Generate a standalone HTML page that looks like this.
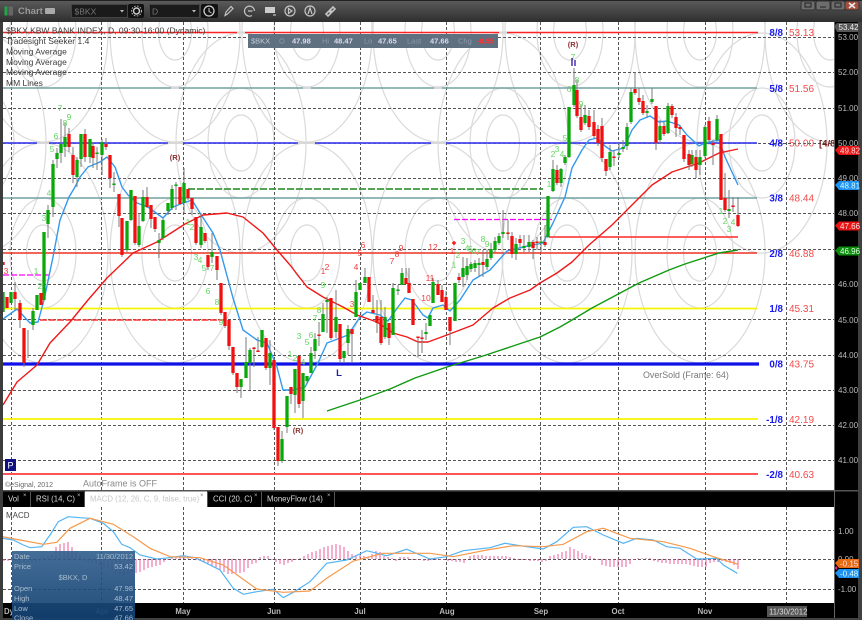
<!DOCTYPE html>
<html><head><meta charset="utf-8"><title>Chart</title>
<style>
html,body{margin:0;padding:0;background:#333;width:862px;height:620px;overflow:hidden}
svg{display:block;font-family:"Liberation Sans",sans-serif}
</style></head><body>
<svg width="862" height="620" viewBox="0 0 862 620" xmlns="http://www.w3.org/2000/svg">
<defs>
<linearGradient id="tb" x1="0" y1="0" x2="0" y2="1"><stop offset="0" stop-color="#5c5c5c"/><stop offset="1" stop-color="#2e2e2e"/></linearGradient>
<linearGradient id="tt" x1="0" y1="0" x2="0" y2="1"><stop offset="0" stop-color="#2f5e8c" stop-opacity=".9"/><stop offset="1" stop-color="#123f70" stop-opacity=".93"/></linearGradient>
<clipPath id="c1"><rect x="3" y="22" width="831" height="468"/></clipPath>
<clipPath id="c2"><rect x="3" y="507" width="831" height="96"/></clipPath>
<clipPath id="c3"><rect x="12" y="551" width="123" height="69"/></clipPath>
<g id="a" fill="none" stroke="#dadada" stroke-width="1.200"><ellipse rx="16.500" ry="28"/><ellipse rx="33" ry="55"/><ellipse rx="65" ry="110"/></g>
</defs>
<rect width="862" height="620" fill="#404040"/>
<rect x="0" y="0" width="862" height="22" fill="url(#tb)"/>
<rect x="0" y="0" width="862" height="1" fill="#222"/>
<!-- title -->
<rect x="4.500" y="6.500" width="3" height="9" fill="#1fa84a"/><rect x="8.500" y="6.500" width="4.500" height="9" fill="#666"/>
<text x="18" y="14" font-size="9.500" font-weight="bold" fill="#9a9a9a">Chart</text>
<rect x="45" y="8" width="10" height="6" rx="1" fill="#aaa"/>
<rect x="71.500" y="4.500" width="56" height="13" fill="#1a1a1a" stroke="#444"/>
<text x="74.500" y="14.500" font-size="8.500" fill="#777">$BKX</text><path d="M120 10h4l-2 2.500z" fill="#bbb"/>
<rect x="128" y="4" width="16" height="14" rx="2" fill="#111"/><circle cx="136.500" cy="11" r="3" fill="none" stroke="#ccc" stroke-width="1.500"/><circle cx="136.500" cy="11" r="5" fill="none" stroke="#bbb" stroke-dasharray="1.500 1.500"/>
<rect x="149.500" y="4.500" width="50" height="13" fill="#1a1a1a" stroke="#444"/>
<text x="152" y="14.500" font-size="8.500" fill="#777">D</text><path d="M192 10h4l-2 2.500z" fill="#bbb"/>
<rect x="201" y="4" width="17" height="14" rx="2" fill="#111"/><circle cx="209" cy="11" r="5" fill="none" stroke="#ccc" stroke-width="1.300"/><path d="M209 8v3.500l2.500 1.500" fill="none" stroke="#ccc"/>
<g fill="none" stroke="#c4c4c4" stroke-width="1.200">
<path d="M225 15.500l1-3.500 5-5.500 2 2-5.500 5.500z"/>
<path d="M254.500 11a5 5 0 1 0-2.500 4.500M248 11h4.500"/>
<rect x="265" y="7" width="10" height="6" fill="#ccc" stroke="none"/><path d="M273 15h3"/>
<circle cx="290" cy="11" r="5"/><path d="M288.500 8.500l3.500 2.500-3.500 2.500z"/>
<circle cx="310" cy="11" r="5"/><path d="M308 14l2-6 2 6"/>
<path d="M326 14l3-3 2 2-3 3zM330 10l3-3 2 2-3 3z" stroke-width="1.600"/>
</g>
<!-- window buttons -->
<g stroke="#333"><rect x="801" y="1" width="14" height="9" rx="2" fill="#6d6d6d"/><rect x="816" y="1" width="14" height="9" rx="2" fill="#6d6d6d"/><rect x="831" y="1" width="14" height="9" rx="2" fill="#6d6d6d"/><rect x="845" y="1" width="14" height="9" rx="2" fill="#a5503c"/></g>
<path d="M805 3h6v4h-6zM820 7h6M835 3h6v4h-6z" fill="none" stroke="#222"/><path d="M849 3l6 5M855 3l-6 5" stroke="#eee" stroke-width="1.500"/>
<!-- main chart -->
<rect x="3" y="22" width="831" height="468" fill="#fff"/>
<rect x="834" y="22" width="24" height="581" fill="#000"/>
<g clip-path="url(#c1)">
<use href="#a" x="43" y="32"/><use href="#a" x="175" y="32"/><use href="#a" x="307" y="32"/><use href="#a" x="438" y="32"/><use href="#a" x="570" y="32"/><use href="#a" x="700" y="32"/><use href="#a" x="830" y="32"/>
<use href="#a" x="-19" y="143"/><use href="#a" x="241" y="143"/><use href="#a" x="503" y="143"/><use href="#a" x="762" y="143"/>
<use href="#a" x="43" y="253"/><use href="#a" x="175" y="253"/><use href="#a" x="307" y="253"/><use href="#a" x="438" y="253"/><use href="#a" x="567" y="253"/><use href="#a" x="700" y="253"/>
<g stroke="#555" stroke-width="1" stroke-dasharray="3 2" fill="none">
<path d="M11.500 22V490M101.500 22V490M183.500 22V490M274.500 22V490M360.500 22V490M446.500 22V490M540.500 22V490M618.500 22V490M705.500 22V490M786.500 22V490"/>
<path d="M3 37.500H834M3 72.500H834M3 108.500H834M3 143.500H834M3 178.500H834M3 213.500H834M3 249.500H834M3 284.500H834M3 319.500H834M3 355.500H834M3 390.500H834M3 425.500H834M3 460.500H834"/>
</g>
<!-- MM lines -->
<g fill="none">
<path d="M3 32.500H758" stroke="#f22" stroke-width="1.600"/>
<path d="M3 88H757" stroke="#72a0a0" stroke-width="1.600"/>
<path d="M3 143H757" stroke="#4a4aee" stroke-width="1.800"/>
<path d="M3 198H757" stroke="#72a0a0" stroke-width="1.600"/>
<path d="M3 253H757" stroke="#e32" stroke-width="1.400"/>
<path d="M3 308.500H757" stroke="#f7f500" stroke-width="1.800"/>
<path d="M3 364H759" stroke="#1010e8" stroke-width="3.200"/>
<path d="M3 419H758" stroke="#f7f500" stroke-width="1.800"/>
<path d="M3 474H758" stroke="#f55" stroke-width="2"/>
<path d="M188 189H543" stroke="#3a9a3a" stroke-width="1.800" stroke-dasharray="7 2"/>
<path d="M454 219.500H552" stroke="#f0f" stroke-width="1.200" stroke-dasharray="6 2"/>
<path d="M3 275H50" stroke="#f0f" stroke-width="1.200" stroke-dasharray="6 2"/>
<path d="M40 320H225" stroke="#f33" stroke-width="1.500" stroke-dasharray="7 1.500"/>
<path d="M549 237H738" stroke="#f44" stroke-width="1.800"/>
</g>
<!-- pinch gaps -->
<path fill="none" stroke="#d8d8d8" stroke-width="2" d="M37 143h12M168 143h15M298 143h17M431 143h15M171 88h8M303 88h8M434 88h8M237 32.500h8M499 32.500h8"/>
<!-- moving averages -->
<g fill="none" stroke-linejoin="round">
<polyline stroke="#3399ee" stroke-width="1.400" points="3,319 17,309 30,323 38,322 44,300 53,257 60,220 69,197 75,187 80,177 88,167 100,162 107,157 115,167 122,187 128,195 137,203 148,207 163,218 173,207 183,203 192,200 200,213 213,233 220,250 233,298 243,330 257,340 267,343 277,367 283,390 293,390 305,387 318,363 327,343 335,340 348,335 360,317 367,312 380,315 388,321 398,307 405,298 412,300 423,315 428,318 433,308 443,305 450,311 460,300 473,280 490,270 507,251 523,247 543,243 553,223 565,197 572,168 582,150 589,140 597,138 605,146 612,151 624,148 632,130 640,120 650,116 659,122 667,121 679,125 687,135 699,146 705,143 719,140 725,157 738,185"/>
<polyline stroke="#f01818" stroke-width="1.400" points="3,405 17,382 37,365 50,343 70,322 88,300 107,278 133,253 157,242 185,224 203,215 227,213 243,217 263,233 277,250 290,265 307,287 323,297 343,307 357,315 377,322 393,333 407,337 418,342 428,342 447,335 473,325 493,308 510,298 530,290 540,283 557,273 572,262 589,245 612,225 630,207 652,185 672,172 699,163 719,153 738,149"/>
<polyline stroke="#119911" stroke-width="1.400" points="327,411 360,400 390,389 415,378 447,367 483,356 510,347 540,337 560,327 572,320 592,308 639,283 669,270 685,264 719,253 738,250"/>
</g>
<!-- wicks -->
<path fill="none" stroke="#7b7b7b" stroke-width="1" d="M15 282V310M20 300V328M24 328V367M28 330V358M33 308V330M44 232V300M48 205V238M53 160V217M57 148V168M61 119V163M65 123V157M69 128V152M73 147V183M77 157V187M81 134V167M85 129V162M90 139V163M93 142V168M97 147V170M102 139V175M106 138V150M110 155V188M114 172V192M119 194V227M122 218V257M127 221V252M131 190V221M135 196V245M139 213V247M143 190V222M147 187V208M151 205V228M155 217V232M159 233V258M163 218V240M168 203V215M172 185V210M176 182V210M180 187V205M184 168V213M188 189V200M192 198V215M196 217V245M201 213V248M205 233V243M208 255V270M212 233V263M217 256V280M221 283V315M225 312V328M229 320V350M233 347V375M237 373V393M241 379V398M246 337V378M250 348V390M254 347V367M258 337V352M262 330V348M266 338V370M270 340V385M274 360V430M278 427V466M282 431V463M287 396V433M291 387V404M295 369V413M299 356V408M303 373V418M307 376V384M311 347V373M315 333V359M319 322V346M323 303V332M327 297V333M331 298V340M336 290V338M340 324V363M344 351V363M348 325V355M352 329V363M356 280V317M360 283V290M365 268V283M369 277V302M373 295V313M377 300V333M381 300V345M385 307V339M389 323V345M393 283V335M398 285V295M402 268V285M406 268V284M409 268V293M413 299V325M418 337V357M422 330V353M426 323V340M430 315V326M433 278V303M438 280V295M442 285V302M446 291V310M450 317V345M455 283V321M459 273V283M463 257V287M467 258V280M471 262V272M475 260V272M479 258V276M483 250V277M487 250V270M491 243V260M495 237V252M499 233V245M503 210V238M508 220V240M512 232V258M516 238V260M520 235V247M524 235V252M529 235V252M533 240V259M537 237V250M541 236V252M545 225V247M548 196V238M553 160V192M557 165V185M561 168V187M565 155V165M569 107V158M574 68V107M577 80V118M581 105V132M585 105V125M589 110V130M594 110V138M598 125V146M602 118V162M606 159V176M610 145V170M614 150V166M619 143V158M623 140V152M627 123V150M631 88V124M635 72V95M639 88V105M643 95V115M647 105V118M652 88V104M656 106V150M660 120V144M664 122V136M668 103V134M672 104V118M676 113V137M680 125V135M684 135V162M689 150V170M692 150V167M696 150V178M700 150V175M705 125V158M709 117V142M713 140V165M717 115V142M721 134V200M725 173V212M729 190V218M733 197V212M738 197V227"/>
<!-- green bodies -->
<path fill="none" stroke="#0aa80a" stroke-width="3.300" d="M3 292V312M11 292V303M33 311V325M37 295V310M44 232V300M48 210V224M53 164V207M57 153V159M61 144V153M65 137V147M77 160V177M81 134V159M90 139V157M97 152.500V154M102 142V155M114 183.500V185M127 221V250M131 190V220M139 226V245M143 197V221M159 240V243M163 220V238M168 203V211M172 189V208M176 184.500V186M184 183V203M201 227V245M212 252V257M241 379V387M246 362V378M250 350V363M262 330V347M270 353V368M282 439V461M287 396V427M295 369V395M303 373V401M307 376V381M311 353V373M315 339V351M323 314V332M327 300V302M336 317V332M344 351V358M348 329V343M356 292V317M360 283V290M365 277V283M385 317V337M393 288V335M398 289.500V291M402 273V285M426 332V334M430 315V326M433 282V303M455 283V321M463 268V277M467 266V275M471 264V269M475 263V268M479 263V265M487 259V267M491 249V258M495 241V250M499 236V243M503 232V234M516 244V254M524 246V248M529 242V247M541 241.500V243M548 196V237M553 169V191M561 169V183M565 157V163M569 107V157M574 85V105M585 115V123M610 152V167M619 153V155M623 147V149M627 127V146M631 92V122M647 111V113M652 99V102M660 126V140M668 106V133M692 155V164M700 157V165M705 127V156M717 119V140M729 209V211"/>
<!-- red bodies -->
<path fill="none" stroke="#f01010" stroke-width="3.300" d="M3 262V265M7 297V308M15 292V299M20 303V320M24 328V363M41 293V305M69 134V147M73 155V175M85 134V157M93 146V158M106 144V147M110 155V178M119 194V216M122 218V255M135 196V243M147 197V207M151 205V219M155 217V229M180 187V204M188 189V198M192 198V209M196 217V243M205 233V241M208 255V267M217 256V270M221 283V313M225 312V326M229 320V346M233 347V373M237 373V387M254 347.500V349M258 350.500V352M266 338V368M274 360V428M278 427V461M291 387V394M299 356V404M319 334.500V336M331 298V338M340 324V359M352 329V334M369 277V302M373 310V313M377 316V323M381 317V343M389 323V338M406 278V284M409 283V293M413 299V325M418 336.500V338M422 337.500V339M438 284V295M442 290V302M446 297V310M450 317V331M459 277V280M483 262V265M508 232.500V234M512 236V254M520 239V243M533 242V248M537 241.500V243M545 242V245M557 170V183M577 90V116M581 117V130M589 116V127M594 122V136M598 129V143M602 126V158M606 159V171M614 156.500V158M635 89V93M639 98V102M643 101V113M656 106V143M664 126V134M672 106V115M676 117V128M680 127V129M684 135V159M689 154V165M696 157V170M709 121V140M713 143V145M721 134V200M725 198V210M733 205.500V207M738 215V226"/>
<path d="M452 243h4M454 241v4" stroke="#f11" stroke-width="1.500"/>
<!-- counts -->
<g font-size="8.500" fill="#62d862" text-anchor="middle" transform="translate(0,-1)">
<text x="60" y="112">7</text><text x="65" y="127">8</text><text x="69" y="121">9</text><text x="56" y="140">6</text><text x="52" y="153">5</text><text x="49" y="197">4</text><text x="44" y="222">3</text><text x="36" y="275">1</text><text x="40" y="290">2</text>
<text x="188" y="226">1</text><text x="192" y="231">2</text><text x="196" y="261">3</text><text x="200" y="264">4</text><text x="204" y="272">5</text><text x="212" y="272">7</text><text x="208" y="295">6</text><text x="217" y="306">8</text><text x="221" y="326">9</text>
<text x="290" y="358">1</text><text x="295" y="362">2</text><text x="299" y="340">3</text><text x="303" y="366">4</text><text x="307" y="346">5</text><text x="311" y="339">6</text><text x="315" y="322">7</text><text x="319" y="314">8</text><text x="323" y="289">9</text>
<text x="454" y="269">1</text><text x="458" y="259">2</text><text x="463" y="245">3</text><text x="467" y="252">4</text><text x="470.500" y="253">5</text><text x="474" y="255">6</text><text x="478" y="256">7</text><text x="483" y="243">8</text><text x="487" y="248">9</text>
<text x="549" y="188">1</text><text x="553" y="158">2</text><text x="557" y="153">3</text><text x="562" y="158">4</text><text x="565" y="142">5</text><text x="569" y="93">6</text><text x="573" y="61">7</text><text x="577" y="84">8</text><text x="581" y="108">9</text>
<text x="721" y="215">1</text><text x="725" y="225">2</text><text x="729" y="233">3</text><text x="733" y="226">4</text>
</g>
<g font-size="8.500" fill="#f23c3c" text-anchor="middle" transform="translate(0,-1)">
<text x="6" y="275">3</text><text x="323" y="275">1</text><text x="327" y="271">2</text><text x="352" y="308">3</text><text x="356" y="271">4</text><text x="360" y="257">5</text><text x="363" y="249">6</text><text x="392" y="265">7</text><text x="397" y="258">8</text><text x="401" y="252">9</text><text x="426" y="302">10</text><text x="430" y="282">11</text><text x="433" y="251">12</text><text x="452" y="255">1</text>
</g>
<g font-size="7.500" font-weight="bold" fill="#8a3030" text-anchor="middle"><text x="175" y="160">(R)</text><text x="298" y="433">(R)</text><text x="573" y="47">(R)</text></g>
<text x="339" y="376" font-size="9.500" font-weight="bold" fill="#2020a0" text-anchor="middle">L</text>
<path d="M572 58v8M575 60v6" stroke="#3010a0" stroke-width="1.300"/>
<!-- MM labels -->
<g font-size="9.800" font-weight="bold" fill="#1818ee" text-anchor="end">
<text x="783" y="36">8/8</text><text x="783" y="92">5/8</text><text x="783" y="146.500">4/8</text><text x="783" y="201.500">3/8</text><text x="783" y="257">2/8</text><text x="783" y="312">1/8</text><text x="783" y="367.500">0/8</text><text x="783" y="423">-1/8</text><text x="783" y="478">-2/8</text>
</g>
<g font-size="10" fill="#f34a4a">
<text x="789" y="36">53.13</text><text x="789" y="92">51.56</text><text x="789" y="146.500">50.00</text><text x="789" y="201.500">48.44</text><text x="789" y="257">46.88</text><text x="789" y="312">45.31</text><text x="789" y="367.500">43.75</text><text x="789" y="423">42.19</text><text x="789" y="478">40.63</text>
</g>
<text x="819" y="146.500" font-size="9.500" font-weight="bold" fill="#7a2020">[4/8</text>
<!-- info box -->
<rect x="248" y="34" width="250" height="14" fill="#5f7080"/>
<g font-size="7.500" fill="#b4bec8"><text x="251" y="43.500" fill="#c4ccd4">$BKX</text><text x="279" y="43.500" fill="#8d9aa8">O</text><text x="322" y="43.500" fill="#8d9aa8">Hi</text><text x="364" y="43.500" fill="#8d9aa8">Lo</text><text x="407" y="43.500" fill="#8d9aa8">Last</text><text x="458" y="43.500" fill="#8d9aa8">Chg</text>
<text x="292" y="43.500" font-weight="bold" fill="#dde">47.98</text><text x="334" y="43.500" font-weight="bold" fill="#dde">48.47</text><text x="378" y="43.500" font-weight="bold" fill="#dde">47.65</text><text x="430" y="43.500" font-weight="bold" fill="#dde">47.66</text><text x="477" y="43.500" font-weight="bold" fill="#f33">-0.55</text></g>
<!-- legend -->
<g font-size="8.500" fill="#3c3c3c"><text x="6" y="33.500">$BKX,KBW BANK INDEX, D, 09:30-16:00 (Dynamic)</text><text x="6" y="44">Tradesight Seeker 1.4</text><text x="6" y="54.500">Moving Average</text><text x="6" y="65">Moving Average</text><text x="6" y="75">Moving Average</text><text x="6" y="86">MM Lines</text></g>
<text x="643" y="378" font-size="8.900" fill="#777">OverSold (Frame: 64)</text>
<text x="83" y="486.500" font-size="9" fill="#888">AutoFrame is OFF</text>
<text x="5" y="487" font-size="7" fill="#666">©eSignal, 2012</text>
<rect x="5" y="459" width="11" height="12" fill="#101080"/><text x="10.500" y="468.500" font-size="9" fill="#fff" text-anchor="middle">P</text>
</g>
<!-- right axis -->
<g font-size="8" fill="#bcbcbc"><text x="838" y="40">53.00</text><text x="838" y="75">52.00</text><text x="838" y="111">51.00</text><text x="838" y="146">50.00</text><text x="838" y="181">49.00</text><text x="838" y="216">48.00</text><text x="838" y="287">46.00</text><text x="838" y="323">45.00</text><text x="838" y="358">44.00</text><text x="838" y="393">43.00</text><text x="838" y="428">42.00</text><text x="838" y="463">41.00</text><text x="838" y="534">1.00</text><text x="838" y="562">0.00</text><text x="838" y="592">-1.00</text></g>
<path d="M834 26l3-3h21v9h-21z" fill="#555"/><text x="838.500" y="30" font-size="8" fill="#eee">53.42</text>
<path d="M835 150l4-4h20v9h-20z" fill="#e51515"/><text x="840" y="153.500" font-size="8" fill="#fdd">49.82</text>
<path d="M835 185l4-4h20v9h-20z" fill="#1e90f0"/><text x="840" y="188.500" font-size="8" fill="#dff">48.81</text>
<path d="M835 225.500l4-4h20v9h-20z" fill="#e51515"/><text x="840" y="229" font-size="8" fill="#fdd">47.66</text>
<path d="M835 250.500l4-4h20v9h-20z" fill="#0c8c0c"/><text x="840" y="254" font-size="8" fill="#dfd">46.96</text>
<!-- tabs -->
<rect x="3" y="490" width="855" height="1.500" fill="#555"/>
<rect x="3" y="491.500" width="831" height="15.500" fill="#000"/>
<rect x="85" y="491.500" width="122" height="15.500" fill="#fff"/>
<path d="M30.500 492V507M84.500 492V507M207.500 492V507M261.500 492V507M334.500 492V507" stroke="#555"/>
<g font-size="7.800" fill="#d8d8d8"><text x="8" y="501.500">Vol</text><text x="36" y="501.500">RSI (14, C)</text><text x="90" y="501.500" fill="#c8c8c8">MACD (12, 26, C, 9, false, true)</text><text x="213" y="501.500">CCI (20, C)</text><text x="267" y="501.500">MoneyFlow (14)</text></g>
<g font-size="6" fill="#bbb"><text x="23" y="497">×</text><text x="77" y="497">×</text><text x="200" y="497" fill="#888">×</text><text x="254" y="497">×</text><text x="327" y="497">×</text></g>
<!-- macd panel -->
<rect x="3" y="507" width="831" height="96" fill="#fff"/>
<g clip-path="url(#c2)">
<g stroke="#555" stroke-dasharray="3 2" fill="none"><path d="M11.500 507V603M101.500 507V603M183.500 507V603M274.500 507V603M360.500 507V603M446.500 507V603M540.500 507V603M618.500 507V603M705.500 507V603M786.500 507V603"/><path d="M3 530.500H834M3 559.500H834M3 589.500H834"/></g>
<path fill="none" stroke="#ee5c9c" stroke-width="1" d="M4 559v2M8 559v2M12 559v2M16 559v2M20 559v3M24 559v3M28 559v3M32 559v3M36 559v3M40 559v2M44 559v-2M48 559v-3M52 559v-5M56 559v-12M60 559v-15M64 559v-16M68 559v-17M72 559v-12M76 559v-8M80 559v-4M84 559v2M88 559v3M92 559v4M96 559v5M100 559v7M104 559v8M108 559v9M112 559v11M116 559v14M120 559v15M124 559v16M128 559v15M132 559v13M136 559v14M140 559v13M144 559v11M148 559v9M152 559v8M156 559v7M160 559v6M164 559v3M168 559v1M172 559v-1M176 559v-2M180 559v-2M184 559v-2M188 559v-1M192 559v-1M196 559v1M200 559v2M204 559v3M208 559v5M212 559v7M216 559v9M220 559v11M224 559v13M228 559v15M232 559v15M236 559v14M240 559v14M244 559v13M248 559v9M252 559v5M256 559v4M260 559v-2M264 559v-3M268 559v-3M272 559v1M276 559v3M280 559v5M284 559v6M288 559v4M292 559v3M296 559v1M300 559v-1M304 559v-3M308 559v-5M312 559v-7M316 559v-8M320 559v-10M324 559v-12M328 559v-13M332 559v-14M336 559v-15M340 559v-14M344 559v-12M348 559v-8M352 559v-5M356 559v-4M360 559v-4M364 559v-3M368 559v-2M372 559v-5M376 559v-8M380 559v-7M384 559v-3M388 559v-2M392 559v-1M396 559v2M400 559v-2M404 559v-2M408 559v-2M412 559v1M416 559v1M420 559v1M424 559v2M428 559v2M432 559v1M436 559v1M440 559v1M444 559v1M448 559v2M452 559v2M456 559v3M460 559v3M464 559v4M470 559v-3M474 559v-4M478 559v-4M482 559v-4M486 559v-3M490 559v-3M494 559v-3M498 559v-3M502 559v-3M506 559v-3M510 559v-2M514 559v-1M518 559v1M522 559v1M526 559v1M530 559v2M534 559v2M538 559v2M542 559v3M546 559v2M550 559v-3M554 559v-4M558 559v-5M562 559v-7M566 559v-8M570 559v-12M574 559v-10M578 559v-8M582 559v-6M586 559v-4M590 559v-3M594 559v-1M598 559v1M602 559v6M606 559v7M610 559v8M614 559v8M618 559v8M622 559v8M626 559v8M630 559v5M634 559v1M638 559v-1M642 559v-1M646 559v-1M650 559v-1M654 559v2M658 559v3M662 559v4M666 559v4M670 559v5M674 559v5M678 559v5M682 559v5M686 559v5M690 559v6M694 559v7M698 559v8M702 559v8M706 559v8M710 559v4M714 559v3M718 559v3M722 559v2M726 559v3M730 559v4M734 559v6M738 559v10"/>
<g fill="none" stroke-width="1.200">
<polyline stroke="#55b4f4" points="2.700,538.300 13.300,540 23.300,545 30,547.700 41.700,546.700 50,535 58.300,521.700 68.300,516.700 80,517.700 90,518.300 103.300,523.300 113.300,531.700 121.700,544.300 130,547.700 140,555 156.700,559 170,557.700 183.300,555.700 195,557.700 206.700,563.300 220,570 233.300,588.300 243.300,594.300 256.700,591.700 273.300,589.300 283.300,597.700 293.300,592.300 310,581.700 326.700,563.300 346.700,560 366.700,550.700 386.700,555.700 406.700,549.300 430,559 446.700,556.700 463.300,550.700 490,547.700 505,543.300 520,545.700 543.300,549 556.700,541.700 573.300,527.300 586.700,526.700 603.300,535 623.300,543.300 636.700,538.300 653.300,540 666.700,546.700 680,548.300 696.700,559 716.700,558.300 723.300,565 737.300,573.300"/>
<polyline stroke="#f59a4e" points="2.700,536.700 20,540 43.300,544.300 56.700,542.300 70,528.300 90,518.300 113.300,524.300 133.300,536.700 150,548.300 170,556.700 200,557.700 223.300,565 256.700,589 283.300,592.300 310,591 326.700,578.300 353.300,561 383.300,553.300 430,553.300 453.300,556.700 486.700,550 513.300,545.700 543.300,546.700 563.300,544.300 586.700,531.700 603.300,528.300 630,538.300 663.300,541.700 690,548.300 713.300,556.700 737.300,564"/>
</g>
<text x="6" y="518" font-size="8" fill="#444">MACD</text>
</g>
<path d="M835 563l4-4h20v9h-20z" fill="#e86a10"/><text x="840" y="566.500" font-size="8" fill="#fdd">-0.15</text>
<path d="M835 573l4-4h20v9h-20z" fill="#1e90f0"/><text x="840" y="576.500" font-size="8" fill="#dff">-0.48</text>
<path d="M834 568l3-2v4z" fill="#e0208a"/>
<!-- bottom axis -->
<rect x="3" y="603" width="855" height="15" fill="#000"/>
<g font-size="7.800" font-weight="bold" fill="#b8b8b8" text-anchor="middle"><text x="183" y="614">May</text><text x="274" y="614">Jun</text><text x="360" y="614">Jul</text><text x="447" y="614">Aug</text><text x="541" y="614">Sep</text><text x="618" y="614">Oct</text><text x="705" y="614">Nov</text></g>
<text x="4" y="614" font-size="7.800" font-weight="bold" fill="#b8b8b8">Dy</text>
<rect x="767" y="606" width="40" height="11" fill="#555"/><text x="769" y="614.500" font-size="7.800" fill="#ddd">11/30/2012</text>
<path d="M834.500 22V618" stroke="#666"/>
<rect x="0" y="22" width="3" height="598" fill="#3c3c3c"/>
<!-- tooltip -->
<rect x="12" y="551" width="123" height="69" fill="url(#tt)"/>
<text x="102" y="614" font-size="7.800" font-weight="bold" fill="#1f4a78" text-anchor="middle">Apr</text>
<g clip-path="url(#c3)" font-size="7.500" fill="#a9bccd">
<text x="14" y="559">Date</text><text x="133" y="559" text-anchor="end">11/30/2012</text>
<text x="14" y="569">Price</text><text x="133" y="569" text-anchor="end">53.42</text>
<text x="73" y="580" text-anchor="middle">$BKX, D</text>
<text x="14" y="591">Open</text><text x="133" y="591" text-anchor="end">47.98</text>
<text x="14" y="601">High</text><text x="133" y="601" text-anchor="end">48.47</text>
<text x="14" y="611">Low</text><text x="133" y="611" text-anchor="end">47.65</text>
<text x="14" y="620.500">Close</text><text x="133" y="620.500" text-anchor="end">47.66</text>
</g>
</svg>
</body></html>
